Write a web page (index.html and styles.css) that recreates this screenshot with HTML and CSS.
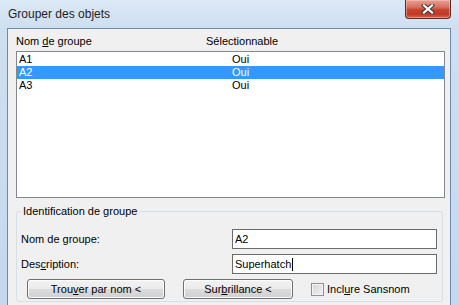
FILE: index.html
```html
<!DOCTYPE html>
<html lang="fr">
<head>
  <meta charset="UTF-8">
  <title>Grouper des objets</title>
  <link rel="stylesheet" href="styles.css">
</head>
<body>
  <div class="window">
    <div class="titlebar">
      <span class="title">Grouper des objets</span>
      <div class="close">
        <svg width="14" height="10" viewBox="0 0 14 10">
          <path d="M3 1.5 L11 8.5 M11 1.5 L3 8.5" stroke="#3c3c3c" stroke-width="4.2" stroke-linecap="square"/>
          <path d="M3 1.5 L11 8.5 M11 1.5 L3 8.5" stroke="#ffffff" stroke-width="2.2" stroke-linecap="square"/>
        </svg>
      </div>
    </div>

    <div class="client">
      <div class="list-head">
        <span class="head-name">Nom <u>d</u>e groupe</span>
        <span>Sélectionnable</span>
      </div>
      <div class="list">
        <div class="row"><span>A1</span><span>Oui</span></div>
        <div class="row selected"><span>A2</span><span>Oui</span></div>
        <div class="row"><span>A3</span><span>Oui</span></div>
      </div>

      <fieldset class="group">
        <legend>Identification de groupe</legend>
        <div class="fields">
          <span class="label">Nom de <u>g</u>roupe:</span>
          <div class="input">A2</div>
          <span class="label">Des<u>c</u>ription:</span>
          <div class="input">Superhatch<span class="caret"></span></div>
        </div>
        <div class="actions">
          <div class="btn btn-find">Trou<u>v</u>er par nom &lt;</div>
          <div class="btn btn-high">Sur<u>b</u>rillance &lt;</div>
          <div class="check"><span class="box"></span><span>Incl<u>u</u>re Sansnom</span></div>
        </div>
      </fieldset>
    </div>
  </div>
</body>
</html>
```

FILE: styles.css
```css
body {
  margin: 0;
  width: 459px;
  height: 305px;
  overflow: hidden;
  font-family: "Liberation Sans", Arial, sans-serif;
  font-size: 11px;
  line-height: 13px;
  color: #000;
}

.window {
  display: flex;
  flex-direction: column;
  width: 459px;
  height: 305px;
  background: linear-gradient(to bottom, #dce8f5 0, #cddff1 28px, #c4d8ee 100%);
}

/** Title bar **/

.titlebar {
  display: flex;
  align-items: flex-start;
  height: 28px;
  padding-left: 8px;
}

.title {
  margin-top: 7px;
  font-size: 12px;
  line-height: 15px;
  color: #1e1e1e;
}

.close {
  display: flex;
  align-items: center;
  justify-content: center;
  margin-left: auto;
  margin-right: 8px;
  width: 44px;
  height: 18px;
  border: 1px solid #5b2a24;
  border-top: 0;
  border-radius: 0 0 4px 4px;
  background: linear-gradient(to bottom, #e8a095 0, #d7705f 40%, #c5412e 55%, #c23a27 80%, #d8654f 100%);
  box-shadow: inset 0 0 0 1px rgba(255, 210, 200, .45);
}

/** Client area **/

.client {
  flex: 1;
  display: flex;
  flex-direction: column;
  margin: 0 8px 0 7px;
  border: 1px solid #6f8aa8;
  border-bottom: 0;
  background: #f0f0f0;
}

.list-head {
  display: flex;
  padding: 6px 0 0 8px;
  height: 13px;
  margin-bottom: 3px;
}

.head-name {
  width: 190px;
}

.list {
  height: 144px;
  margin: 0 5px 0 8px;
  padding-top: 1px;
  border: 1px solid #828790;
  background: #fff;
}

.row {
  display: grid;
  grid-template-columns: 213px 1fr;
  padding-left: 2px;
  height: 13px;
}

.row.selected {
  background: #3399ff;
  color: #fff;
}

/** Group box **/

.group {
  margin: 7px 7px 0 8px;
  padding: 2px 5px 2px 4px;
  border: 1px solid #d5dfe5;
  border-radius: 3px;
  min-width: 0;
}

.group legend {
  padding: 0 2px;
  line-height: 13px;
}

.fields {
  display: grid;
  grid-template-columns: 211px 205px;
  row-gap: 5px;
  align-items: center;
  margin-top: 9px;
}

.input {
  height: 18px;
  line-height: 18px;
  padding-left: 2px;
  border: 1px solid #6b6b6b;
  background: #fff;
}

.caret {
  display: inline-block;
  width: 1px;
  height: 13px;
  margin-left: 1px;
  vertical-align: -3px;
  background: #000;
}

.actions {
  display: flex;
  align-items: center;
  gap: 18px;
  margin: 5px 0 0 6px;
}

.btn {
  height: 18px;
  line-height: 18px;
  text-align: center;
  border: 1px solid #707070;
  border-radius: 3px;
  background: linear-gradient(to bottom, #f2f2f2 0, #ebebeb 50%, #dddddd 50%, #cfcfcf 100%);
  box-shadow: inset 0 0 0 1px #fcfcfc;
}

.btn-find {
  width: 136px;
}

.btn-high {
  width: 108px;
}

.check {
  display: flex;
  align-items: center;
  gap: 3px;
}

.box {
  width: 11px;
  height: 11px;
  border: 1px solid #8e8f8f;
  background: linear-gradient(135deg, #d6d6d6 0, #f0f0f0 100%);
  box-shadow: inset 0 0 0 1px #f4f4f4;
}
```
